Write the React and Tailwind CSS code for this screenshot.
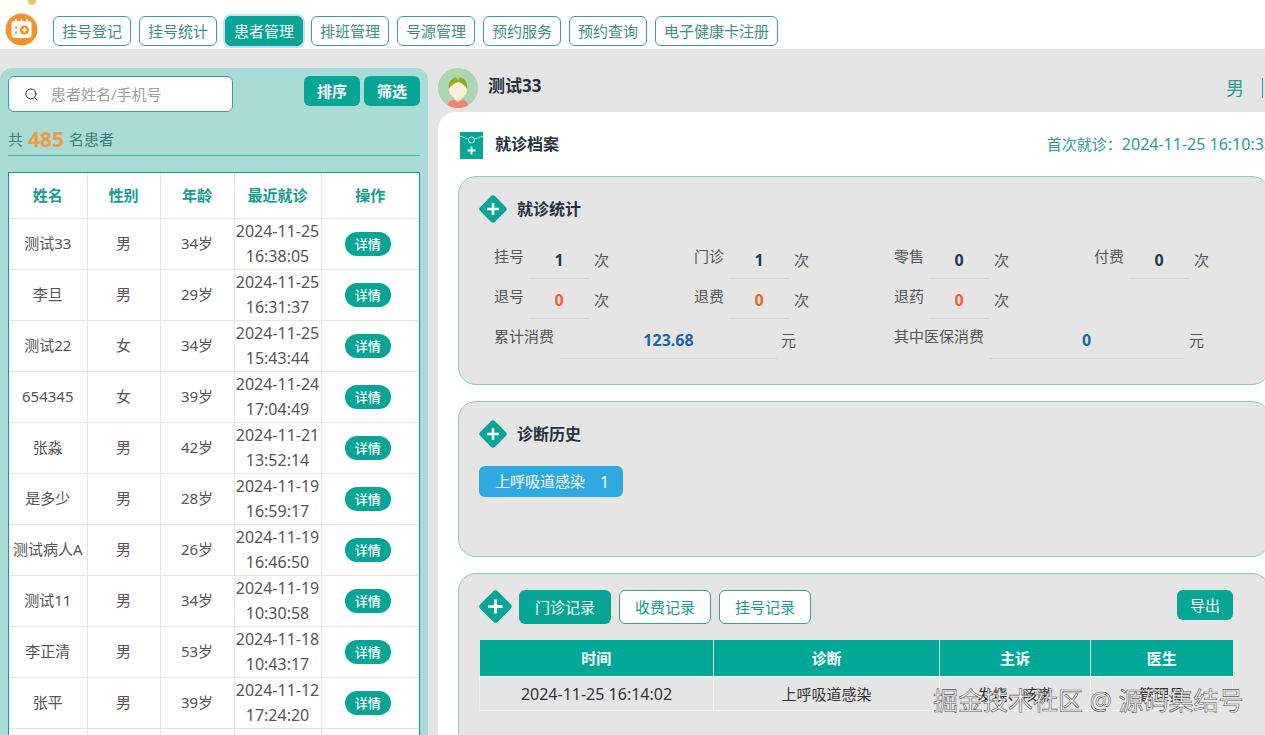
import { Search } from 'lucide-react'

const navItems = ['挂号登记', '挂号统计', '患者管理', '排班管理', '号源管理', '预约服务', '预约查询', '电子健康卡注册']

const patients = [
  ['测试33', '男', '34岁', '2024-11-25', '16:38:05'],
  ['李旦', '男', '29岁', '2024-11-25', '16:31:37'],
  ['测试22', '女', '34岁', '2024-11-25', '15:43:44'],
  ['654345', '女', '39岁', '2024-11-24', '17:04:49'],
  ['张淼', '男', '42岁', '2024-11-21', '13:52:14'],
  ['是多少', '男', '28岁', '2024-11-19', '16:59:17'],
  ['测试病人A', '男', '26岁', '2024-11-19', '16:46:50'],
  ['测试11', '男', '34岁', '2024-11-19', '10:30:58'],
  ['李正清', '男', '53岁', '2024-11-18', '10:43:17'],
  ['张平', '男', '39岁', '2024-11-12', '17:24:20'],
]

const stats = [
  ['挂号', '1', 'text-[#1f3a4d]'],
  ['门诊', '1', 'text-[#1f3a4d]'],
  ['零售', '0', 'text-[#1f3a4d]'],
  ['付费', '0', 'text-[#1f3a4d]'],
  ['退号', '0', 'text-[#f0642d]'],
  ['退费', '0', 'text-[#f0642d]'],
  ['退药', '0', 'text-[#f0642d]'],
]

function Diamond({ size = 28 }) {
  return (
    <svg width={size} height={size} viewBox="0 0 28 28" className="shrink-0">
      <rect x="3.5" y="3.5" width="21" height="21" rx="3" transform="rotate(45 14 14)" fill="#07a596" />
      <path d="M14 8v12M8 14h12" stroke="#fff" strokeWidth="2.6" />
    </svg>
  )
}

function Logo() {
  return (
    <svg width="33" height="33" viewBox="0 0 33 33" className="shrink-0">
      <circle cx="16.5" cy="16.5" r="16" fill="#f4922a" />
      <rect x="6.5" y="8" width="20" height="17" rx="3" fill="#fff" />
      <path d="M11 6v4M16.5 6v4M22 6v4" stroke="#fff" strokeWidth="1.6" />
      <circle cx="19.5" cy="17" r="4.6" fill="#f4922a" />
      <path d="M19.5 14.6v4.8M17.1 17h4.8" stroke="#fff" strokeWidth="1.4" />
      <path d="M10 14.5h2M10 19.5h2" stroke="#f4922a" strokeWidth="2" />
    </svg>
  )
}

function Avatar() {
  return (
    <svg width="40" height="40" viewBox="0 0 40 40" className="shrink-0">
      <clipPath id="av"><circle cx="20" cy="20" r="20" /></clipPath>
      <g clipPath="url(#av)">
        <rect width="40" height="40" fill="#abd6b0" />
        <path d="M9 40c0-6 5-9 11-9s11 3 11 9z" fill="#ee8677" />
        <path d="M16 31l4 3 4-3-1-4h-6z" fill="#fbe9d2" />
        <ellipse cx="20" cy="21" rx="9" ry="10" fill="#fdeeda" />
        <path d="M11 21c-1-6 1-9 5-11 2-1 3 0 4 2 1-2 2-3 4-2 4 2 6 5 5 11-2-4-5-6-9-7-3 1-7 3-9 7z" fill="#8dae1e" />
      </g>
    </svg>
  )
}

function RecordIcon() {
  return (
    <svg width="23" height="27" viewBox="0 0 23 27" className="shrink-0">
      <rect width="23" height="27" fill="#07a596" />
      <path d="M0 4l8 3M23 4l-8 3" stroke="#d9f3ef" strokeWidth="0.8" />
      <circle cx="11.5" cy="8" r="3" fill="none" stroke="#d9f3ef" strokeWidth="1" />
      <path d="M11.5 14.5v8M7.5 18.5h8" stroke="#fff" strokeWidth="1.8" />
    </svg>
  )
}

function Card({ className, children }) {
  return (
    <section className={`w-[812px] shrink-0 rounded-[18px] border border-[#8fcbbb] bg-[#e5e5e6] ${className}`}>
      {children}
    </section>
  )
}

function SectionTitle({ children }) {
  return (
    <div className="flex items-center gap-[10px] h-7">
      <Diamond />
      <h3 className="text-base font-bold text-[#2a3040]">{children}</h3>
    </div>
  )
}

function Stat({ label, value, color }) {
  return (
    <div className="flex items-start text-[15px] text-[#555]">
      <span className="w-[35px] leading-[34px] -mt-[1px]">{label}</span>
      <span className={`w-[60px] h-[39px] border-b border-[#cfd2d3] text-center text-base leading-[40px] font-bold ${color}`}>{value}</span>
      <span className="ml-[5px] leading-[40px]">次</span>
    </div>
  )
}

function PatientPanel() {
  return (
    <aside className="w-[428px] shrink-0 h-[667px] rounded-t-xl bg-[#a9dbd7] px-2 pt-2 overflow-hidden">
      <div className="flex items-start justify-between">
        <div className="w-[225px] h-9 rounded-md border border-[#3d9f94] bg-white flex items-center pl-[15px] gap-[12px] text-[15px] text-[#9a9fa3]">
          <Search size={15} strokeWidth={1.6} className="text-[#333]" />
          患者姓名/手机号
        </div>
        <div className="flex gap-1">
          <button className="w-14 h-[30px] rounded-md bg-[#07a596] text-[15px] font-bold text-white">排序</button>
          <button className="w-14 h-[30px] rounded-md bg-[#07a596] text-[15px] font-bold text-white">筛选</button>
        </div>
      </div>
      <div className="mt-[14px] h-[30px] border-b border-[#4fb0a5] flex items-center pb-[2px] text-[15px] text-[#3c7f78]">
        共
        <b className="mx-[5px] text-[21px] text-[#ee9a3f]">485</b>
        名患者
      </div>
      <div className="mt-4 w-[412px] border border-[#169c8f] bg-white">
        <table className="w-full table-fixed border-collapse text-[15px] text-[#555]">
          <colgroup>
            <col className="w-[78px]" />
            <col className="w-[73px]" />
            <col className="w-[74px]" />
            <col className="w-[87px]" />
            <col />
          </colgroup>
          <thead>
            <tr className="h-[45px] text-[#169c8f]">
              {['姓名', '性别', '年龄', '最近就诊', '操作'].map(h => (
                <th key={h} className="border border-t-0 border-[#e4e5e6] font-bold first:border-l-0 last:border-r-0">{h}</th>
              ))}
            </tr>
          </thead>
          <tbody>
            {patients.map(p => (
              <tr key={p[0]} className="h-[51px] text-center">
                <td className="border border-l-0 border-[#e4e5e6] whitespace-nowrap">{p[0]}</td>
                <td className="border border-[#e4e5e6]">{p[1]}</td>
                <td className="border border-[#e4e5e6]">{p[2]}</td>
                <td className="border border-[#e4e5e6] text-base leading-[25px] whitespace-nowrap">
                  {p[3]}<br />{p[4]}
                </td>
                <td className="border border-r-0 border-[#e4e5e6] pr-[5px]">
                  <span className="inline-block w-[46px] h-6 rounded-full bg-[#07a596] text-[13px] font-medium leading-6 text-white align-middle">详情</span>
                </td>
              </tr>
            ))}
            <tr className="h-[51px]">
              <td className="border border-l-0 border-[#e4e5e6]" />
              <td className="border border-[#e4e5e6]" />
              <td className="border border-[#e4e5e6]" />
              <td className="border border-[#e4e5e6]" />
              <td className="border border-r-0 border-[#e4e5e6]" />
            </tr>
          </tbody>
        </table>
      </div>
    </aside>
  )
}

function RecordCard() {
  return (
    <Card className="mt-4 h-[200px] pl-5 pt-4">
      <div className="w-[754px] flex items-start">
        <Diamond size={33} />
        <button className="ml-[7px] w-[92px] h-[34px] rounded-md bg-[#07a596] text-[15px] text-white">门诊记录</button>
        <button className="ml-2 w-[92px] h-[34px] rounded-md border border-[#3d9f94] bg-white text-[15px] text-[#169c8f]">收费记录</button>
        <button className="ml-2 w-[92px] h-[34px] rounded-md border border-[#3d9f94] bg-white text-[15px] text-[#169c8f]">挂号记录</button>
        <button className="ml-auto w-14 h-[30px] rounded-md bg-[#07a596] text-[15px] text-white">导出</button>
      </div>
      <table className="mt-4 w-[754px] table-fixed border-collapse text-[15px] text-[#333]">
        <colgroup>
          <col className="w-[234px]" />
          <col className="w-[226px]" />
          <col className="w-[151px]" />
          <col />
        </colgroup>
        <thead>
          <tr className="h-9 bg-[#00a898] text-white">
            {['时间', '诊断', '主诉', '医生'].map(h => (
              <th key={h} className="border-x border-[#e8f6f4] font-bold first:border-l-0 last:border-r-0">{h}</th>
            ))}
          </tr>
        </thead>
        <tbody>
          <tr className="h-[34px] text-center">
            <td className="border border-[#f0f1f1] pt-[2px] text-base">2024-11-25 16:14:02</td>
            <td className="border border-[#f0f1f1] pt-[2px]">上呼吸道感染</td>
            <td className="border border-[#f0f1f1] pt-[2px]">发烧、咳嗽</td>
            <td className="border border-[#f0f1f1] pt-[2px]">管理员</td>
          </tr>
        </tbody>
      </table>
    </Card>
  )
}

function DetailPanel() {
  return (
    <main className="flex-1 min-w-0 ml-[10px] overflow-hidden">
      <div className="h-[44px] flex items-start pr-[2px]">
        <Avatar />
        <span className="ml-[10px] mt-[5px] text-[17px] font-bold text-[#2a3040]">测试33</span>
        <span className="ml-auto mt-[6px] text-lg text-[#2a9d90]">男</span>
        <span className="ml-[18px] mt-[10px] w-px h-5 bg-[#2a9d90]" />
      </div>

      <div className="w-[860px] h-[700px] rounded-tl-[18px] bg-white pl-5 pt-5">
        <div className="w-[812px] h-[27px] flex items-center">
          <span className="ml-[2px]"><RecordIcon /></span>
          <h2 className="ml-[12px] mb-[3px] text-base font-bold text-[#2a3040]">就诊档案</h2>
          <span className="ml-auto mb-[3px] -mr-[3px] text-[15px] text-[#2a9d90] whitespace-nowrap">
            首次就诊：<span className="text-base">2024-11-25 16:10:33</span>
          </span>
        </div>

        <Card className="mt-[17px] h-[209px] pl-5 pt-[18px]">
          <SectionTitle>就诊统计</SectionTitle>
          <div className="mt-[17px] pl-[15px] grid grid-cols-[200px_200px_200px_200px]">
            {stats.map(([label, value, color]) => (
              <Stat key={label} label={label} value={value} color={color} />
            ))}
          </div>
          <div className="pl-[15px] flex items-start text-[15px] text-[#555]">
            <div className="w-[400px] flex items-start">
              <span className="w-[66px] leading-[34px] -mt-[1px]">累计消费</span>
              <span className="w-[217px] h-[39px] border-b border-[#cfd2d3] text-center text-base leading-[40px] font-bold text-[#1769aa]">123.68</span>
              <span className="ml-1 leading-[40px]">元</span>
            </div>
            <div className="flex items-start">
              <span className="w-[95px] leading-[34px] -mt-[1px]">其中医保消费</span>
              <span className="w-[195px] h-[39px] border-b border-[#cfd2d3] text-center text-base leading-[40px] font-bold text-[#1769aa]">0</span>
              <span className="ml-[5px] leading-[40px]">元</span>
            </div>
          </div>
        </Card>

        <Card className="mt-4 h-[156px] pl-5 pt-[18px]">
          <SectionTitle>诊断历史</SectionTitle>
          <div className="mt-[18px] w-[144px] h-[31px] rounded-md bg-[#2ea9e1] pl-4 flex items-center text-[15px] text-white">
            上呼吸道感染
            <span className="ml-[15px] text-base">1</span>
          </div>
        </Card>

        <RecordCard />
      </div>
    </main>
  )
}

export default function App() {
  return (
    <div className="relative w-[1265px] h-[735px] overflow-hidden bg-[#e5e5e6] font-['Noto_Sans','Noto_Sans_CJK_SC',sans-serif]">
      <header className="relative h-[49px] bg-white flex items-start pl-[5px] pt-4">
        <span className="absolute left-[28px] top-0 w-2 h-[5px] rounded-b-full bg-[#e8c46a]" />
        <div className="-mt-[3px]"><Logo /></div>
        <nav className="ml-[15px] flex gap-2">
          {navItems.map(item => (
            item === '患者管理' ? (
              <button key={item} className="h-[30px] px-[8px] rounded-md border border-[#07a596] bg-[#07a596] text-[15px] text-white whitespace-nowrap shadow-[0_0_0_2px_#bfe3fb]">{item}</button>
            ) : (
              <button key={item} className="h-[30px] px-[8px] rounded-md border border-[#3d9f94] bg-white text-[15px] text-[#3d8f86] whitespace-nowrap">{item}</button>
            )
          ))}
        </nav>
      </header>

      <div className="flex pt-[19px]">
        <PatientPanel />
        <DetailPanel />
      </div>

      {/* 水印 */}
      <div className="absolute left-[933px] top-[684px] text-[25px] leading-8 text-white whitespace-nowrap [-webkit-text-stroke:0.6px_#555]">
        掘金技术社区 @ 源码集结号
      </div>
    </div>
  )
}
